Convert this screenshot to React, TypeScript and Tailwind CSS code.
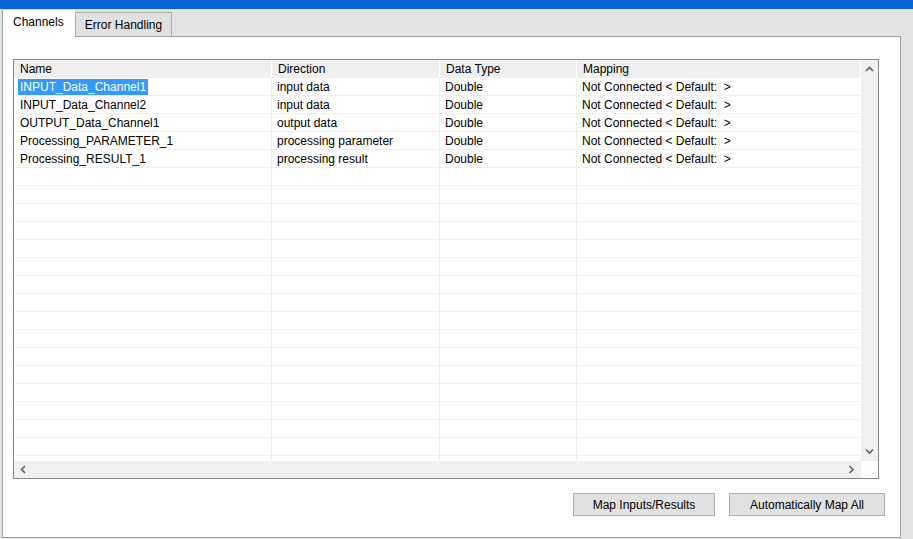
const COLUMNS = [
  { key: 'name', label: 'Name', width: 'w-[258px]' },
  { key: 'direction', label: 'Direction', width: 'w-[168px]' },
  { key: 'type', label: 'Data Type', width: 'w-[137px]' },
  { key: 'mapping', label: 'Mapping', width: 'flex-1' },
] as const

const ROWS = [
  { name: 'INPUT_Data_Channel1', direction: 'input data', type: 'Double', mapping: 'Not Connected < Default:  >' },
  { name: 'INPUT_Data_Channel2', direction: 'input data', type: 'Double', mapping: 'Not Connected < Default:  >' },
  { name: 'OUTPUT_Data_Channel1', direction: 'output data', type: 'Double', mapping: 'Not Connected < Default:  >' },
  { name: 'Processing_PARAMETER_1', direction: 'processing parameter', type: 'Double', mapping: 'Not Connected < Default:  >' },
  { name: 'Processing_RESULT_1', direction: 'processing result', type: 'Double', mapping: 'Not Connected < Default:  >' },
]

const EMPTY_ROWS = 17

// small scrollbar chevrons
function Chevron({ dir }: { dir: 'up' | 'down' | 'left' | 'right' }) {
  const d = {
    up: 'M1 5 L4.5 1.5 L8 5',
    down: 'M1 1.5 L4.5 5 L8 1.5',
    left: 'M5 1 L1.5 4.5 L5 8',
    right: 'M1.5 1 L5 4.5 L1.5 8',
  }[dir]
  const vertical = dir === 'up' || dir === 'down'
  return (
    <svg width={vertical ? 9 : 7} height={vertical ? 7 : 9} viewBox={vertical ? '0 0 9 7' : '0 0 7 9'}>
      <path d={d} fill="none" stroke="#606060" strokeWidth={1.6} />
    </svg>
  )
}

export default function App() {
  return (
    <div className="flex h-[539px] w-[913px] flex-col overflow-hidden bg-[#e3e3e3] font-['Liberation_Sans',Arial,sans-serif] text-[12px] text-black">
      {/* title strip */}
      <div className="h-[9px] shrink-0 bg-[#0a63d4]" />

      <div className="flex flex-1 flex-col pl-[2px] pr-[12px] pb-[1px]">
        {/* tabs */}
        <div className="flex h-[27px] shrink-0 items-end">
          <div className="relative z-10 -mb-px flex h-[27px] w-[73px] items-center border-l border-[#a0a0a0] bg-white pl-[10px] pb-[3px]">
            Channels
          </div>
          <div className="flex h-[24px] w-[97px] items-center justify-center border border-b-0 border-[#adadad] bg-[#e1e1e1]">
            Error Handling
          </div>
        </div>

        {/* panel */}
        <div className="flex flex-1 flex-col border border-[#a0a0a0] bg-white pl-[10px] pr-[15px] pt-[22px]">
          {/* table box */}
          <div className="flex h-[420px] w-[866px] flex-col border border-[#828790]">
            <div className="flex flex-1 overflow-hidden">
              <div className="flex flex-1 flex-col overflow-hidden">
                {/* header */}
                <div className="flex h-[18px] shrink-0 bg-[#efefef]">
                  {COLUMNS.map((c) => (
                    <div key={c.key} className={`${c.width} flex items-center border-r border-white pl-[6px]`}>
                      {c.label}
                    </div>
                  ))}
                </div>
                {/* rows */}
                {ROWS.map((r, i) => (
                  <div key={r.name} className="flex h-[18px] shrink-0 border-b border-[#f0f0f0]">
                    <div className="flex w-[258px] items-center border-r border-[#f0f0f0] pl-[4px]">
                      <span className={i === 0 ? 'bg-[#3399ff] px-[2px] text-white leading-[16px]' : 'px-[2px]'}>{r.name}</span>
                    </div>
                    <div className="flex w-[168px] items-center border-r border-[#f0f0f0] pl-[5px]">{r.direction}</div>
                    <div className="flex w-[137px] items-center border-r border-[#f0f0f0] pl-[5px]">{r.type}</div>
                    <div className="flex flex-1 items-center whitespace-pre pl-[5px]">{r.mapping}</div>
                  </div>
                ))}
                {Array.from({ length: EMPTY_ROWS }, (_, i) => (
                  <div key={i} className="flex h-[18px] shrink-0 border-b border-[#f0f0f0]">
                    <div className="w-[258px] border-r border-[#f0f0f0]" />
                    <div className="w-[168px] border-r border-[#f0f0f0]" />
                    <div className="w-[137px] border-r border-[#f0f0f0]" />
                    <div className="flex-1" />
                  </div>
                ))}
              </div>
              {/* vertical scrollbar */}
              <div className="flex w-[17px] shrink-0 flex-col items-center justify-between bg-[#f0f0f0] py-[6px]">
                <Chevron dir="up" />
                <Chevron dir="down" />
              </div>
            </div>
            {/* horizontal scrollbar */}
            <div className="flex h-[17px] shrink-0">
              <div className="flex flex-1 items-center justify-between bg-[#f0f0f0] px-[6px]">
                <Chevron dir="left" />
                <Chevron dir="right" />
              </div>
              <div className="w-[17px] bg-white" />
            </div>
          </div>

          {/* buttons */}
          <div className="mt-[14px] flex justify-end gap-[14px]">
            <button className="h-[23px] w-[142px] border border-[#adadad] bg-[#e1e1e1]">Map Inputs/Results</button>
            <button className="h-[23px] w-[156px] border border-[#adadad] bg-[#e1e1e1]">Automatically Map All</button>
          </div>
        </div>
      </div>
    </div>
  )
}
